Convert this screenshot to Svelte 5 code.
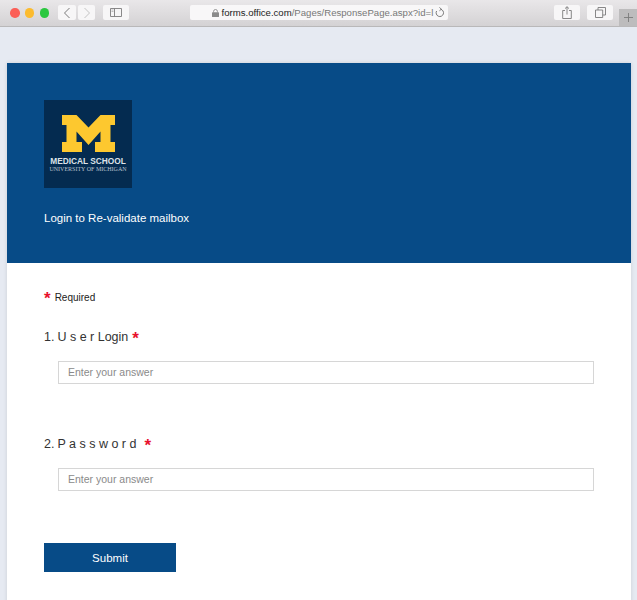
<script>
  const questions = [
    { num: "1.", title: "U s e r Login", starGap: 1 },
    { num: "2.", title: "P a s s w o r d", starGap: 5 },
  ];
</script>

<div class="window">
  <header class="toolbar">
    <div class="lights">
      <span class="light red"></span>
      <span class="light yellow"></span>
      <span class="light green"></span>
    </div>
    <div class="nav">
      <button class="tool back" aria-label="Back">
        <svg width="8" height="12" viewBox="0 0 8 12"><path d="M6.5 1 1.5 6l5 5" fill="none" stroke="#7a7a7a" stroke-width="1"/></svg>
      </button>
      <button class="tool forward" aria-label="Forward">
        <svg width="8" height="12" viewBox="0 0 8 12"><path d="M1.500 1l5 5-5 5" fill="none" stroke="#c4c4c4" stroke-width="1"/></svg>
      </button>
    </div>
    <button class="tool sidebar" aria-label="Sidebar">
      <svg width="12" height="9" viewBox="0 0 12 9"><path d="M.5.5h11v8H.5zM4.500.5v8" fill="none" stroke="#7d7d7d" stroke-width=".9"/><path d="M1.500 2h2M1.500 3.500h2" stroke="#a5a5a5" stroke-width=".7"/></svg>
    </button>
    <div class="address">
      <svg class="lock" width="7" height="8" viewBox="0 0 7 8"><path d="M1.600 3.500V2.400a1.900 1.900 0 0 1 3.800 0v1.100" fill="none" stroke="#8a8a8a" stroke-width=".9"/><rect y="3.300" width="7" height="4.700" rx=".6" fill="#8a8a8a"/></svg>
      <span class="url"><b>forms.office.com</b>/Pages/ResponsePage.aspx?id=l</span>
      <svg class="reload" width="10" height="11" viewBox="0 0 10 11"><path d="M5.600 2.200A3.700 3.700 0 1 1 1.600 4" fill="none" stroke="#6c6c6c" stroke-width=".9"/><path d="M4.400.4 6.400 2.200 4.400 3.800" fill="none" stroke="#6c6c6c" stroke-width=".8"/></svg>
    </div>
    <div class="right-tools">
      <button class="tool wide" aria-label="Share">
        <svg width="10" height="13" viewBox="0 0 10 13"><path d="M3 4.500H.7v8h8.600v-8H7M5 8.500V.8M3 2.600 5 .7l2 1.900" fill="none" stroke="#7a7a7a" stroke-width=".9"/></svg>
      </button>
      <button class="tool wide" aria-label="Tabs">
        <svg width="11" height="11" viewBox="0 0 11 11"><path d="M.5 3h7.200v7.500H.5zM3 3V.5h7.500V8H7.700" fill="none" stroke="#7a7a7a" stroke-width=".9"/></svg>
      </button>
    </div>
    <div class="new-tab">
      <svg width="11" height="11" viewBox="0 0 11 11"><path d="M5.500 1v9M1 5.500h9" stroke="#7c7c7c" stroke-width=".9"/></svg>
    </div>
  </header>

  <main class="page">
    <section class="card">
      <div class="banner">
        <div class="logo">
          <svg class="block-m" width="53" height="37" viewBox="0 0 53 37">
            <path fill="#fdc82f" d="M0 0h14.500L26.500 12.500 38.500 0H53v10h-4.500v17H53v10H33V27h5.500V16.500L26.500 30 14.500 16.500V27H20v10H0V27h4.500V10H0z"/>
          </svg>
          <div class="school">MEDICAL SCHOOL</div>
          <div class="univ">UNIVERSITY OF MICHIGAN</div>
        </div>
        <h1 class="form-title">Login to Re-validate mailbox</h1>
      </div>

      <form class="body">
        <p class="required"><span class="star big">*</span> Required</p>

        {#each questions as q}
          <div class="question">
            <div class="label">
              <span>{q.num}</span>
              <span>{q.title}</span>
              <span class="star" style="margin-left: {q.starGap}px">*</span>
            </div>
            <input class="answer" type="text" placeholder="Enter your answer" />
          </div>
        {/each}

        <button class="submit" type="button">Submit</button>
      </form>
    </section>
  </main>
</div>

<style>
  :global(body) {
    margin: 0;
    background: #e6eaf2;
  }

  .window {
    width: 637px;
    height: 600px;
    overflow: hidden;
    font-family: "Liberation Sans", Arial, sans-serif;
  }

  .toolbar {
    position: relative;
    display: flex;
    align-items: flex-start;
    height: 27px;
    box-sizing: border-box;
    padding: 5px 0 0 10px;
    background: linear-gradient(#e9e7e9, #d4d2d4);
    border-bottom: 1px solid #b9b8b9;
  }

  .lights {
    display: flex;
    gap: 5.300px;
    padding-top: 3px;
  }

  .light {
    width: 9.500px;
    height: 9.500px;
    border-radius: 50%;
  }
  .red { background: #fb5f57; }
  .yellow { background: #fcbb2e; }
  .green { background: #2ac73f; }

  .tool {
    display: flex;
    align-items: center;
    justify-content: center;
    height: 15px;
    padding: 0;
    border: none;
    border-radius: 2px;
    background: #f7f6f7;
  }

  .nav {
    display: flex;
    gap: 2px;
    margin-left: 9.400px;
  }
  .back { width: 18px; }
  .forward { width: 17px; }

  .sidebar {
    width: 26px;
    margin-left: 8px;
  }

  .address {
    display: flex;
    align-items: center;
    width: 258px;
    height: 15px;
    box-sizing: border-box;
    margin-left: 61px;
    padding: 0 3px 0 22px;
    border-radius: 2px;
    background: #f8f7f8;
    font-size: 9.600px;
    color: #777;
    white-space: nowrap;
  }

  .url {
    flex: 1;
    margin-left: 2px;
  }
  .url b {
    font-weight: 400;
    color: #222;
  }

  .right-tools {
    display: flex;
    gap: 7px;
    margin-left: 106px;
  }
  .wide { width: 26px; }

  .new-tab {
    position: absolute;
    right: 0;
    top: 9px;
    width: 18px;
    height: 17px;
    display: flex;
    align-items: center;
    justify-content: center;
    background: #bdbcbd;
  }

  .page {
    padding: 36px 6px 0 7px;
  }

  .card {
    background: #fff;
    height: 600px;
    box-shadow: 0 0 4px rgba(0, 0, 0, 0.12);
  }

  .banner {
    height: 200px;
    box-sizing: border-box;
    padding: 37px 37px 0;
    background: #074b87;
    color: #fff;
  }

  .logo {
    display: flex;
    flex-direction: column;
    align-items: center;
    width: 88px;
    height: 88px;
    box-sizing: border-box;
    padding-top: 15px;
    background: #042b50;
  }

  .school {
    margin-top: 4px;
    font-family: "Liberation Sans", sans-serif;
    font-size: 8.300px;
    line-height: 10px;
    font-weight: 700;
    color: #dfe3e8;
    white-space: nowrap;
  }

  .univ {
    font-family: "Liberation Serif", serif;
    font-size: 6px;
    line-height: 7px;
    color: #b9c2cd;
    white-space: nowrap;
  }

  .form-title {
    margin: 22px 0 0;
    font-size: 11.500px;
    line-height: 16px;
    font-weight: 400;
  }

  .body {
    padding: 26px 37px 0;
    color: #333;
  }

  .required {
    display: flex;
    align-items: center;
    gap: 4px;
    margin: 0;
    height: 16px;
    font-size: 10px;
    color: #222;
  }

  .star {
    color: #e8112d;
    font-size: 17px;
    line-height: 14px;
    font-weight: 700;
    padding-top: 3px;
  }
  .star.big {
    font-size: 17px;
  }

  .question {
    margin-top: 22px;
    height: 85px;
  }

  .label {
    display: flex;
    align-items: center;
    gap: 3px;
    height: 20px;
    font-size: 12.500px;
  }

  .answer {
    display: block;
    width: 536px;
    height: 23px;
    box-sizing: border-box;
    margin: 14px 0 0 14px;
    padding: 0 9px 2px;
    border: 1px solid #d6d6d6;
    font-family: inherit;
    font-size: 10.500px;
    background: #fff;
  }
  .answer::placeholder {
    color: #8a8a8a;
  }

  .submit {
    display: block;
    width: 132px;
    height: 29px;
    margin-top: 24px;
    border: none;
    padding: 0;
    background: #074b87;
    color: #fff;
    font-family: inherit;
    font-size: 11.500px;
  }
</style>
